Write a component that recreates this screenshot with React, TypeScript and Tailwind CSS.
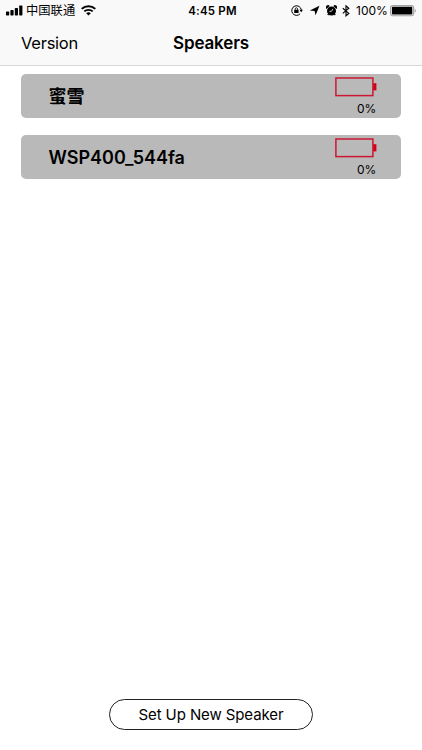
const speakers = [
  { id: 1, name: '蜜雪', charge: 0 },
  { id: 2, name: 'WSP400_544fa', charge: 0 },
];

function SignalIcon() {
  return (
    <svg className="shrink-0" width="17" height="11" viewBox="0 0 17 11" fill="#000">
      <rect x="0" y="6.5" width="3.2" height="4" rx="0.7" />
      <rect x="4.4" y="5" width="3.2" height="5.5" rx="0.7" />
      <rect x="8.8" y="3" width="3.2" height="7.5" rx="0.7" />
      <rect x="13.2" y="0.5" width="3.2" height="10" rx="0.7" />
    </svg>
  );
}

function WifiIcon() {
  return (
    <svg className="shrink-0" width="15" height="11" viewBox="0 0 14 11" preserveAspectRatio="none" fill="none" stroke="#000">
      <path d="M0.7 3.9a9 9 0 0 1 12.6 0" strokeWidth="2" />
      <path d="M3.1 6.4a5.6 5.6 0 0 1 7.8 0" strokeWidth="1.8" />
      <path d="M7 10.4 4.8 8.2a3.2 3.2 0 0 1 4.4 0z" fill="#000" stroke="none" />
    </svg>
  );
}

function RotationLockIcon() {
  return (
    <svg className="shrink-0" width="12" height="12" viewBox="0 0 12 12" fill="none" stroke="#000">
      <path d="M9.1 8.8A4.8 4.8 0 1 1 10.3 4.9" strokeWidth="1" />
      <path d="M8.5 4.7h3.4l-1.7 2.5z" fill="#000" stroke="none" />
      <rect x="3.2" y="4.7" width="4.4" height="3.4" rx="0.4" fill="#000" stroke="none" />
      <path d="M4.2 4.9V4a1.2 1.2 0 0 1 2.4 0v.9" strokeWidth="0.8" />
    </svg>
  );
}

function LocationIcon() {
  return (
    <svg className="shrink-0" width="11" height="11" viewBox="0 0 11 11" fill="#000">
      <path d="M10.5 0.7 6.6 10.2 5.6 6.1 0.8 5.4z" />
    </svg>
  );
}

function AlarmIcon() {
  return (
    <svg className="shrink-0" width="11" height="12" viewBox="0.5 0 11 12">
      <circle cx="6" cy="6" r="4.5" fill="#000" />
      <path d="M1 4A2.2 2.2 0 0 1 4.2 0.9zM11 4A2.2 2.2 0 0 0 7.8 0.9z" fill="#000" />
      <path d="m3 9.2-.7 1M9 9.2l.7 1" stroke="#000" strokeWidth="1.2" />
      <path d="M7.5 3.9 6 6.3H4" fill="none" stroke="#f9f9f9" strokeWidth="0.8" />
    </svg>
  );
}

function BluetoothIcon() {
  return (
    <svg className="shrink-0" width="8" height="12" viewBox="0 0 8 12" fill="none" stroke="#000" strokeWidth="1.15">
      <path d="m0.8 3.2 6 5.2L4 10.8V0.8l2.8 2.4-6 5.2" />
    </svg>
  );
}

function PhoneBatteryIcon() {
  return (
    <svg className="shrink-0" width="26" height="12" viewBox="0 0 26 12">
      <rect x="0.6" y="0.6" width="23" height="10.2" rx="2.2" fill="none" stroke="#a3a3a3" strokeWidth="1.1" />
      <rect x="1.9" y="1.8" width="20.4" height="7.8" rx="1" fill="#000" />
      <path d="M24.6 3.7c1.5.6 1.5 3.4 0 4z" fill="#999" />
    </svg>
  );
}

function SpeakerBattery() {
  return (
    <svg className="shrink-0" width="42" height="20" viewBox="0 0 42 20">
      <rect x="0.9" y="1" width="37" height="17.6" fill="none" stroke="#cb1731" strokeWidth="1.5" />
      <rect x="38.2" y="6.2" width="3.2" height="7.2" fill="#d0021b" />
    </svg>
  );
}

function StatusBar() {
  return (
    <div className="flex h-[21px] items-center px-1.5">
      <div className="flex flex-1 items-center">
        <SignalIcon />
        <span className="ml-[3px] pt-0.5 text-[12.3px] leading-none">中国联通</span>
        <span className="ml-1.5 flex">
          <WifiIcon />
        </span>
      </div>
      <span className="pl-[3px] pt-0.5 text-[11.5px] font-semibold leading-none tracking-[0.2px]">4:45 PM</span>
      <div className="flex flex-1 items-center justify-end">
        <RotationLockIcon />
        <span className="ml-[6px] flex">
          <LocationIcon />
        </span>
        <span className="ml-[6px] flex">
          <AlarmIcon />
        </span>
        <span className="ml-[5px] flex">
          <BluetoothIcon />
        </span>
        <span className="ml-1.5 w-[32px] text-[12px] leading-none">100%</span>
        <span className="ml-[2px] flex">
          <PhoneBatteryIcon />
        </span>
      </div>
    </div>
  );
}

export default function App() {
  return (
    <div className="flex h-[750px] w-[422px] flex-col overflow-hidden whitespace-nowrap bg-white font-[Inter,'Noto_Sans_CJK_SC',sans-serif] text-black">
      <header className="h-[66px] border-b border-[#d9d9d9] bg-[#f9f9f9]">
        <StatusBar />
        <nav className="flex h-[44px] items-center px-[21px]">
          <div className="flex-1">
            <button className="text-[16.5px] leading-none tracking-[-0.25px]">Version</button>
          </div>
          <h1 className="text-[17px] font-semibold leading-none tracking-[-0.15px]">Speakers</h1>
          <div className="flex-1" />
        </nav>
      </header>

      <main className="flex flex-1 flex-col gap-[16.5px] px-[21px] pt-[7.5px]">
        {speakers.map(speaker => (
          <div key={speaker.id} className="flex h-[44.5px] items-center justify-between rounded-[5px] bg-[#b9b9b9] pl-[27.5px] pr-6">
            <span className="pt-0.5 text-[18px] font-semibold leading-none">{speaker.name}</span>
            <div className="flex flex-col items-end">
              <SpeakerBattery />
              <span className="mt-[5px] pr-px text-[12px] leading-[13px] tracking-[-0.2px]">{speaker.charge}%</span>
            </div>
          </div>
        ))}
      </main>

      <footer className="flex justify-center pb-5">
        <button className="h-[31px] w-[204px] rounded-full border border-[#222] text-[15px] leading-none tracking-[-0.1px]">
          Set Up New Speaker
        </button>
      </footer>
    </div>
  );
}
